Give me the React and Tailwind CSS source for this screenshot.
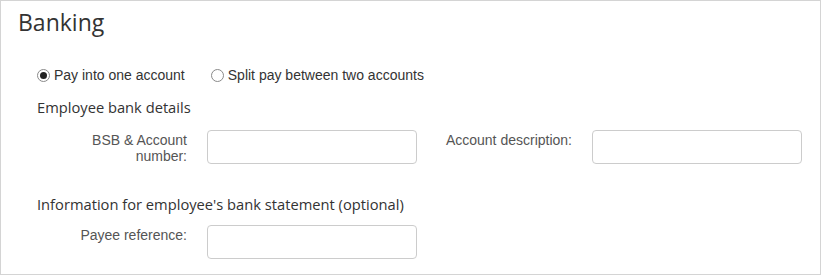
import React from "react";

const headFont = { fontFamily: '"Open Sans", "Noto Sans", sans-serif' };

const Radio = ({ checked, label }) => (
  <label className="flex items-center gap-[4px] text-[14px] leading-[20px] text-[#333]">
    <span className="w-[13px] h-[13px] rounded-full border border-[#8a8a8a] bg-white flex items-center justify-center">
      {checked && <span className="w-[7px] h-[7px] rounded-full bg-[#222]" />}
    </span>
    <span>{label}</span>
  </label>
);

const Field = ({ label, labelWidth }) => (
  <div className="flex items-start">
    <div
      className="text-right text-[14px] leading-[16px] text-[#555] pt-[2px] pr-[20px]"
      style={{ width: labelWidth }}
    >
      {label}
    </div>
    <input
      type="text"
      className="w-[210px] h-[34px] rounded-[4px] border border-[#cccccc] bg-white outline-none"
    />
  </div>
);

export default function App() {
  return (
    <div className="w-[821px] h-[275px] bg-white border border-[#d4d4d4] font-['Liberation_Sans',Arial,sans-serif]">
      <div className="pl-[17px] pt-[5px]">
        <h2 className="text-[23px] leading-[32px] text-[#333]" style={headFont}>
          Banking
        </h2>
      </div>

      <div className="pl-[36px] pt-[27px] flex gap-[26px]">
        <Radio checked label="Pay into one account" />
        <Radio label="Split pay between two accounts" />
      </div>

      <div className="pl-[36px] pt-[11px]">
        <h3 className="text-[14.7px] leading-[22px] text-[#333]" style={headFont}>
          Employee bank details
        </h3>
      </div>

      <div className="flex pt-[12px] pl-[36px]">
        <Field label={<>BSB &amp; Account<br />number:</>} labelWidth={170} />
        <Field label="Account description:" labelWidth={175} />
      </div>

      <div className="pl-[36px] pt-[29px]">
        <h3 className="text-[14.7px] leading-[22px] text-[#333]" style={headFont}>
          Information for employee's bank statement (optional)
        </h3>
      </div>

      <div className="flex pt-[10px] pl-[36px]">
        <Field label="Payee reference:" labelWidth={170} />
      </div>
    </div>
  );
}
